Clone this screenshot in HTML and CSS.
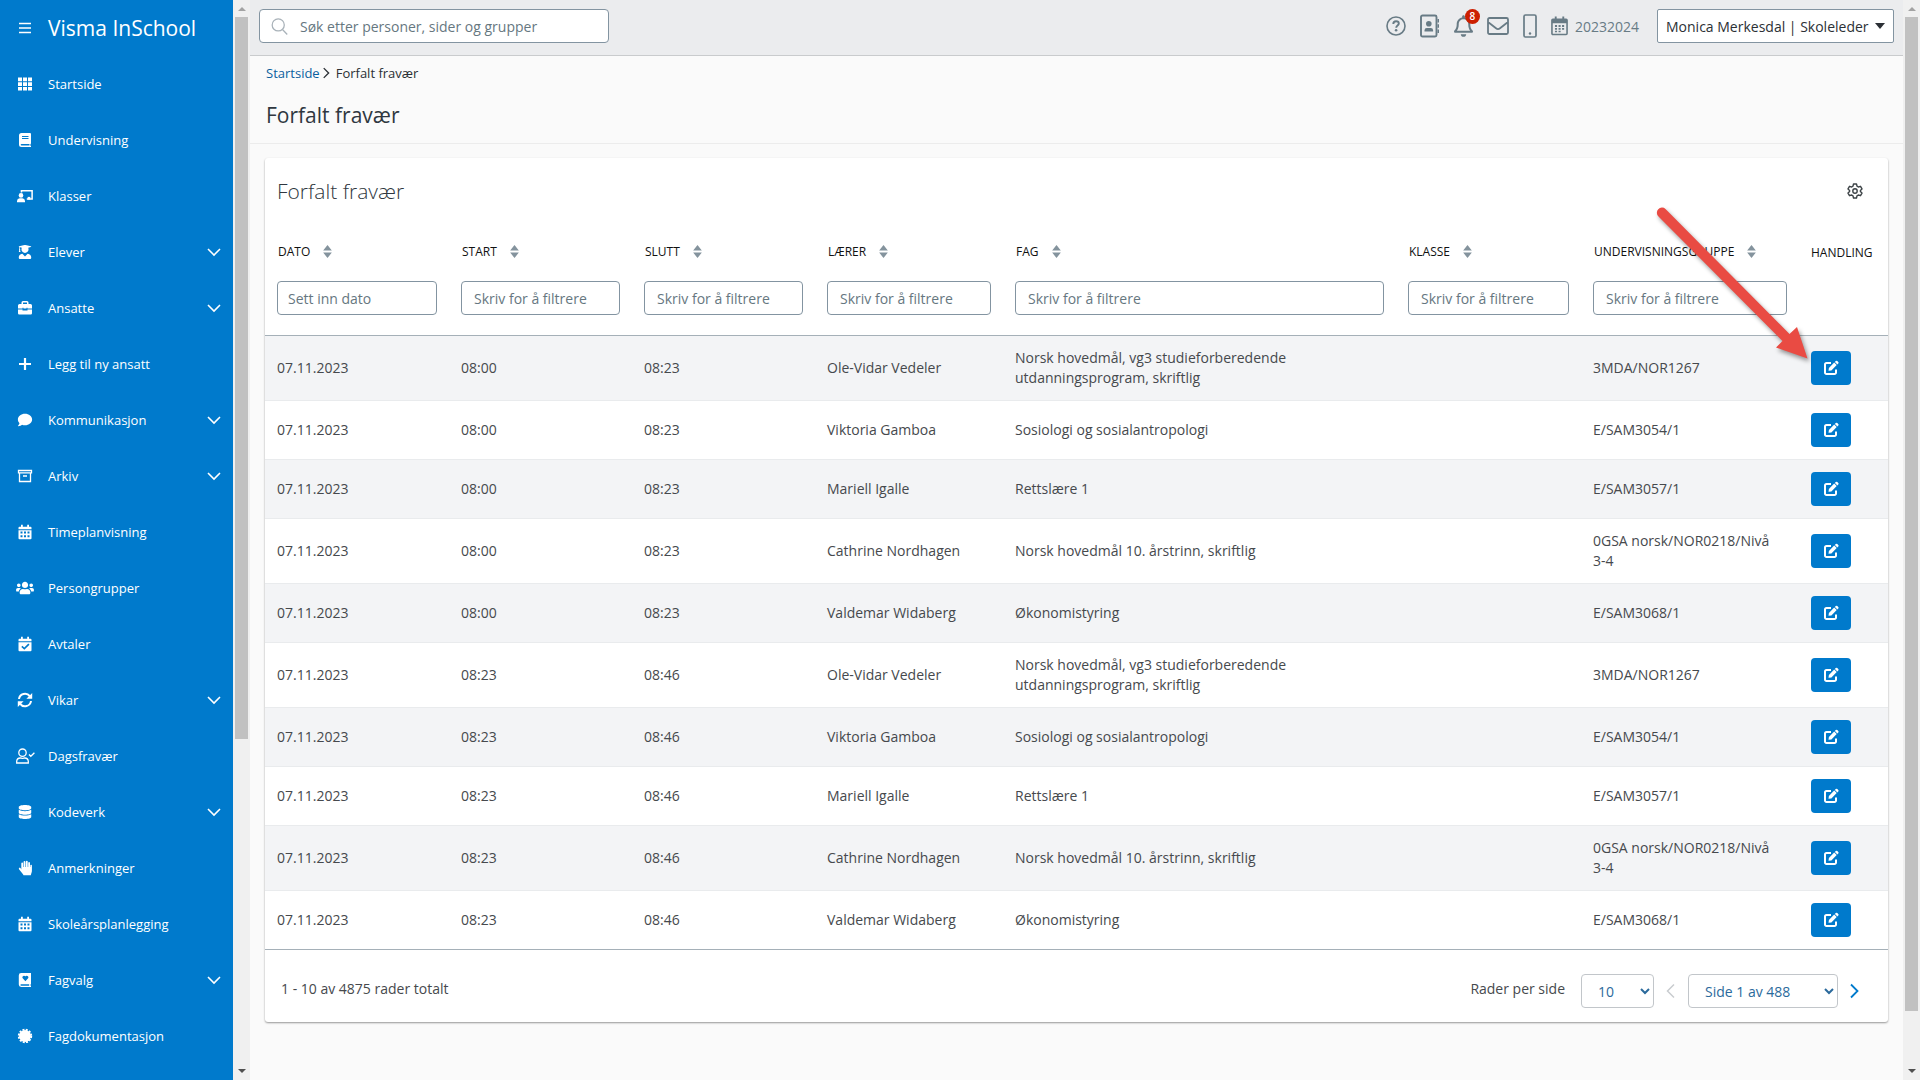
FILE: index.html
```
<!DOCTYPE html>
<html lang="no">
<head>
  <meta charset="UTF-8">
  <title>Visma InSchool - Forfalt fravær</title>
  <link rel="stylesheet" href="styles.css">
</head>
<body>
  <!-- icon sprite -->
  <svg class="sprite" aria-hidden="true">
    <symbol id="i-bars" viewBox="0 0 16 16"><path d="M2 3.5h12M2 8h12M2 12.5h12" stroke="currentColor" stroke-width="1.6"/></symbol>
    <symbol id="i-grid" viewBox="0 0 16 16"><path d="M1 1.500h4v3.700H1zM6 1.500h4v3.700H6zM11 1.500h4v3.700h-4zM1 6.200h4v3.700H1zM6 6.200h4v3.700H6zM11 6.200h4v3.700h-4zM1 10.900h4v3.700H1zM6 10.900h4v3.700H6zM11 10.900h4v3.700h-4z"/></symbol>
    <symbol id="i-book" viewBox="0 0 16 16"><path fill-rule="evenodd" d="M4.500 1H13a1 1 0 0 1 1 1v9.500l-.6.8v1.400l.6.4V15H4.500A2.500 2.500 0 0 1 2 12.500v-9A2.500 2.500 0 0 1 4.500 1zM5 4v1h6.500V4zM5 6v1h6.500V6zM4.500 12a.8.8 0 0 0 0 1.600h8V12z"/></symbol>
    <symbol id="i-class" viewBox="-1 -1 22 18"><path d="M6 4V2h12v9.500h-6" fill="none" stroke="currentColor" stroke-width="1.700"/><path d="M13 9h3v3h-3z"/><circle cx="5.500" cy="7.300" r="2.600"/><path d="M1 15v-1.500A3.200 3.200 0 0 1 4 10.500h3a3.200 3.200 0 0 1 3 3V15z"/></symbol>
    <symbol id="i-student" viewBox="-28 -32 504 576"><path d="M319.400 320.600L224 416l-95.400-95.400C57.100 323.700 0 382.200 0 454.400v9.600c0 26.500 21.500 48 48 48h352c26.500 0 48-21.500 48-48v-9.600c0-72.200-57.100-130.700-128.600-133.800zM13.600 79.800l6.400 1.500v58.400c-7 4.200-12 11.500-12 20.300 0 8.400 4.600 15.400 11.100 19.700L3.500 242c-1.700 6.900 2.100 14 7.600 14h41.800c5.500 0 9.300-7.100 7.600-14l-15.600-62.300C51.400 175.400 56 168.400 56 160c0-8.800-5-16.100-12-20.300V87.100l66 15.900c-8.600 17.200-14 36.400-14 57 0 70.700 57.300 128 128 128s128-57.300 128-128c0-20.600-5.300-39.800-14-57l96.300-23.200c18.200-4.400 18.200-27.100 0-31.500l-190.400-46c-13-3.100-26.700-3.100-39.700 0L13.600 48.200c-18.100 4.400-18.100 27.200 0 31.600z"/></symbol>
    <symbol id="i-case" viewBox="0 0 16 16"><path fill-rule="evenodd" d="M4.500 4V2.500A1.500 1.500 0 0 1 6 1h4a1.500 1.500 0 0 1 1.500 1.500V4h2A1.500 1.500 0 0 1 15 5.500V8.500h-4.500V7.700h-1v.8h-3v-.8h-1v.8H1v-3A1.500 1.500 0 0 1 2.500 4zM6 2.500V4h4V2.500zM1 9.500h4.500v1h5v-1H15v3.800a1.200 1.200 0 0 1-1.200 1.200H2.200A1.200 1.200 0 0 1 1 13.300z"/></symbol>
    <symbol id="i-plus" viewBox="0 0 16 16"><path d="M8 2v12M2 8h12" stroke="currentColor" stroke-width="2.200"/></symbol>
    <symbol id="i-comment" viewBox="-32 -32 576 576"><path d="M256 32C114.600 32 0 125.100 0 240c0 49.600 21.400 95 57 130.700C44.500 421.100 2.700 466 2.200 466.500c-2.200 2.300-2.800 5.700-1.500 8.700S4.800 480 8 480c66.300 0 116-31.800 140.600-51.400 32.700 12.300 69 19.400 107.400 19.400 141.400 0 256-93.100 256-208S397.400 32 256 32z"/></symbol>
    <symbol id="i-archive" viewBox="0 0 16 16"><path d="M1.500 2.500h13v2.300h-13zM2.500 5v8.500h11V5M6 8h4" fill="none" stroke="currentColor" stroke-width="1.300"/></symbol>
    <symbol id="i-calendar" viewBox="0 0 16 16"><path fill-rule="evenodd" d="M4 .8h1.800v2h4.400v-2H12v2h1.500a1 1 0 0 1 1 1v1.400h-13V3.800a1 1 0 0 1 1-1H4zM1.500 6.200h13v8a1 1 0 0 1-1 1h-11a1 1 0 0 1-1-1zM3.500 7.500v2h2v-2zM7 7.500v2h2v-2zM10.500 7.500v2h2v-2zM3.500 11.200v2h2v-2zM7 11.200v2h2v-2zM10.500 11.200v2h2v-2z"/></symbol>
    <symbol id="i-calcheck" viewBox="0 0 16 16"><path fill-rule="evenodd" d="M4 .8h1.800v2h4.400v-2H12v2h1.500a1 1 0 0 1 1 1v1.400h-13V3.800a1 1 0 0 1 1-1H4zM1.500 6.200h13v8a1 1 0 0 1-1 1h-11a1 1 0 0 1-1-1zM11.300 7.600L7.300 11.500 5.400 9.700l-1.100 1.200 3 2.900 5.200-5z"/></symbol>
    <symbol id="i-users" viewBox="-40 -32 720 576"><path d="M96 224c35.300 0 64-28.700 64-64s-28.700-64-64-64-64 28.700-64 64 28.700 64 64 64zm448 0c35.300 0 64-28.700 64-64s-28.700-64-64-64-64 28.700-64 64 28.700 64 64 64zm32 32h-64c-17.600 0-33.500 7.100-45.100 18.600 40.300 22.100 68.900 62 75.100 109.400h66c17.700 0 32-14.300 32-32v-32c0-35.300-28.700-64-64-64zm-256 0c61.900 0 112-50.100 112-112S381.900 32 320 32 208 82.100 208 144s50.100 112 112 112zm76.800 32h-8.300c-20.800 10-43.900 16-68.500 16s-47.600-6-68.500-16h-8.300C179.600 288 128 339.600 128 403.200V432c0 26.500 21.500 48 48 48h288c26.500 0 48-21.500 48-48v-28.800c0-63.600-51.600-115.200-115.200-115.200zm-223.700-13.400C161.500 263.100 145.600 256 128 256H64c-35.300 0-64 28.700-64 64v32c0 17.700 14.300 32 32 32h65.900c6.300-47.400 34.900-87.300 75.200-109.400z"/></symbol>
    <symbol id="i-sync" viewBox="0 0 16 16"><path d="M2 7a6 6 0 0 1 10.800-2.800M14 9a6 6 0 0 1-10.800 2.800" fill="none" stroke="currentColor" stroke-width="2"/><path d="M15.200 1v5.800H9.400zM.8 15V9.200h5.800z"/></symbol>
    <symbol id="i-usercheck" viewBox="0 0 20 16"><g fill="none" stroke="currentColor" stroke-width="1.300"><circle cx="7.500" cy="4.700" r="3.700"/><path d="M1.700 15v-1.800a3.500 3.500 0 0 1 3.500-3.200c1 0 1.300.4 2.300.4s1.300-.4 2.300-.4a3.500 3.500 0 0 1 3.500 3.200V15zM14 6.500l1.800 1.800L19.400 4.700"/></g></symbol>
    <symbol id="i-database" viewBox="-32 -32 512 576"><path d="M448 73.143v45.714C448 159.143 347.667 192 224 192S0 159.143 0 118.857V73.143C0 32.857 100.333 0 224 0s224 32.857 224 73.143zM448 176v102.857C448 319.143 347.667 352 224 352S0 319.143 0 278.857V176c48.125 33.143 136.208 48.572 224 48.572S399.874 209.143 448 176zm0 160v102.857C448 479.143 347.667 512 224 512S0 479.143 0 438.857V336c48.125 33.143 136.208 48.572 224 48.572S399.874 369.143 448 336z"/></symbol>
    <symbol id="i-hand" viewBox="0 0 16 16"><path d="M4.300 9.500V3.500a.9.900 0 0 1 1.800 0V7h.5V1.900a.9.900 0 0 1 1.800 0V7h.5V1.600a.9.900 0 0 1 1.800 0V7h.5V3a.9.900 0 0 1 1.800 0V7h.3V5.500a.8.800 0 0 1 1.600 0v5.200a5 5 0 0 1-.5 2.300l-.6 2.300H6.500l-.5-1.100-4-5a1 1 0 0 1 1.500-1.300z"/></symbol>
    <symbol id="i-bookheart" viewBox="0 0 16 16"><path fill-rule="evenodd" d="M4.200 1H14v11.200h-.5v1.600h.5V15H4.200A2.400 2.400 0 0 1 1.800 12.600V3.400A2.400 2.400 0 0 1 4.200 1zM8.400 9.200l2.700-2.900a1.600 1.600 0 0 0-2.300-2.200l-.4.400-.4-.4a1.600 1.600 0 0 0-2.300 2.200zM4.200 12.200a.8.800 0 0 0 0 1.600h8v-1.600z"/></symbol>
    <symbol id="i-seal" viewBox="0 0 16 16"><circle cx="8" cy="8" r="6"/><circle cx="8" cy="8" r="6.300" fill="none" stroke="currentColor" stroke-width="1.800" stroke-dasharray="2 1.299"/></symbol>
    <symbol id="i-down" viewBox="0 0 16 16"><path d="M2 5l6 6 6-6" fill="none" stroke="currentColor" stroke-width="1.600"/></symbol>
    <symbol id="i-right" viewBox="0 0 16 16"><path d="M5 1.500L11.500 8 5 14.500" fill="none" stroke="currentColor" stroke-width="1.800"/></symbol>
    <symbol id="i-left" viewBox="0 0 16 16"><path d="M11 1.500L4.500 8l6.500 6.500" fill="none" stroke="currentColor" stroke-width="1.500"/></symbol>
    <symbol id="i-search" viewBox="0 0 16 16"><path d="M11 11l4.300 4.500" stroke="currentColor" stroke-width="1.200"/><circle cx="6.800" cy="6.500" r="5.700" fill="none" stroke="currentColor" stroke-width="1.200"/></symbol>
    <symbol id="i-help" viewBox="0 0 20 20"><g fill="none" stroke="currentColor"><circle cx="10" cy="10" r="9" stroke-width="1.600"/><path d="M7.300 8c0-1.700 1.200-2.700 2.800-2.700s2.700 1 2.700 2.300c0 2-2.600 1.900-2.600 4.100" stroke-width="1.900"/></g><circle cx="10.100" cy="14.200" r="1.300"/></symbol>
    <symbol id="i-address" viewBox="0 0 20 24"><rect x="1" y="1.500" width="15.500" height="21" rx="1.500" fill="none" stroke="currentColor" stroke-width="1.900"/><path d="M17.500 5H19v3.500h-1.500zM17.500 10.200H19v3.500h-1.500zM17.500 15.500H19V19h-1.500zM4.500 17.500v-1.300A2.300 2.300 0 0 1 6.800 14h4a2.300 2.300 0 0 1 2.300 2.200v1.300z"/><circle cx="8.800" cy="9.700" r="2.800"/></symbol>
    <symbol id="i-bell" viewBox="0 0 448 512"><path d="M439.390 362.290c-19.320-20.760-55.470-51.990-55.470-154.290 0-77.700-54.480-139.900-127.940-155.160V32c0-17.670-14.320-32-31.980-32s-31.980 14.330-31.980 32v20.840C118.560 68.100 64.080 130.300 64.080 208c0 102.300-36.150 133.530-55.470 154.290-6 6.450-8.660 14.160-8.610 21.710.11 16.400 12.980 32 32.100 32h383.800c19.120 0 32-15.600 32.100-32 .05-7.550-2.610-15.270-8.610-21.710zM67.530 368c21.220-27.970 44.420-74.330 44.530-159.420 0-.2-.06-.38-.06-.58 0-61.860 50.140-112 112-112s112 50.140 112 112c0 .2-.06.38-.06.58.11 85.100 23.310 131.460 44.530 159.420H67.530zM224 512c35.320 0 63.970-28.650 63.970-64H160.030c0 35.350 28.650 64 63.970 64z"/></symbol>
    <symbol id="i-mail" viewBox="0 0 22 18"><path d="M1 2.500A1.500 1.500 0 0 1 2.500 1h17A1.500 1.500 0 0 1 21 2.500v13a1.500 1.500 0 0 1-1.500 1.500h-17A1.500 1.500 0 0 1 1 15.500zM1 5l8 6.300a3.300 3.300 0 0 0 4 0L21 5" fill="none" stroke="currentColor" stroke-width="1.800"/></symbol>
    <symbol id="i-phone" viewBox="0 0 14 24"><rect x="1" y="1" width="12" height="22" rx="1.500" fill="none" stroke="currentColor" stroke-width="1.700"/><circle cx="7" cy="19.500" r="1.200"/></symbol>
    <symbol id="i-date" viewBox="0 0 18 20"><path d="M1 4a1 1 0 0 1 1-1h14a1 1 0 0 1 1 1v14a1 1 0 0 1-1 1H2a1 1 0 0 1-1-1z" fill="none" stroke="currentColor" stroke-width="1.700"/><path d="M1 3h16v4H1zM4 0h2v3H4zM12 0h2v3h-2zM4.200 9h2.200v2H4.200zM8 9h2.200v2H8zM11.700 9h2.200v2h-2.200zM4.200 12h2.200v2H4.200zM8 12h2.200v2H8zM11.700 12h2.200v2h-2.200zM4.200 15h2.200v1.500H4.200zM8 15h2.200v1.500H8z"/></symbol>
    <symbol id="i-gear" viewBox="0 0 16 16"><path d="M6.500 1h3l.5 2.200 1.300.8 2.200-.7 1.500 2.600L13.400 7.400v1.200l1.600 1.500-1.500 2.600-2.200-.7-1.300.8-.5 2.200h-3L6 12.800 4.700 12l-2.200.7L1 10.100l1.600-1.500V7.400L1 5.900l1.500-2.600 2.200.7L6 3.200z" fill="none" stroke="currentColor" stroke-width="1.400" stroke-linejoin="round"/><circle cx="8" cy="8" r="2.200" fill="none" stroke="currentColor" stroke-width="1.400"/></symbol>
    <symbol id="i-sort" viewBox="0 0 8 12"><path d="M4 0l4 5H0zM4 12L0 7h8z"/></symbol>
    <symbol id="i-edit" viewBox="0 0 16 16"><path d="M8 3H3.500A1.500 1.500 0 0 0 2 4.500v8A1.500 1.500 0 0 0 3.500 14h8a1.500 1.500 0 0 0 1.500-1.500V9.500" fill="none" stroke="currentColor" stroke-width="2"/><path d="M5.500 10.800l.4-2.900 5.300-5.300 2.500 2.500-5.300 5.300zM11.900 1.900l.8-.8a1.100 1.100 0 0 1 1.600 0l.9.900a1.100 1.100 0 0 1 0 1.600l-.8.800z"/></symbol>
  </svg>

  <aside class="sidebar">
    <div class="brand">
      <button class="menu-toggle" type="button" aria-label="Meny"><svg class="nav-icon"><use href="#i-bars"/></svg></button>
      <span>Visma InSchool</span>
    </div>
    <nav id="menu"></nav>
  </aside>
  <div class="scrollbar scrollbar-menu"><i class="arrow-up"></i><div class="track"><div class="thumb"></div></div><i class="arrow-down"></i></div>

  <main class="main">
    <header class="topbar">
      <label class="search">
        <svg><use href="#i-search"/></svg>
        <input type="text" placeholder="Søk etter personer, sider og grupper" aria-label="Søk">
      </label>
      <div class="tools">
        <button type="button" aria-label="Hjelp"><svg class="icon-help"><use href="#i-help"/></svg></button>
        <button type="button" aria-label="Kontakter"><svg class="icon-address"><use href="#i-address"/></svg></button>
        <button type="button" class="bell" aria-label="Varsler"><svg class="icon-bell"><use href="#i-bell"/></svg><span class="badge">8</span></button>
        <button type="button" aria-label="Meldinger"><svg class="icon-mail"><use href="#i-mail"/></svg></button>
        <button type="button" aria-label="Mobil"><svg class="icon-phone"><use href="#i-phone"/></svg></button>
        <button type="button" class="year"><svg class="icon-date"><use href="#i-date"/></svg>20232024</button>
      </div>
      <select class="user" aria-label="Bruker"><option>Monica Merkesdal | Skoleleder</option></select>
    </header>

    <div class="page-head">
      <div class="breadcrumb"><a href="#">Startside</a><svg><use href="#i-right"/></svg><span>Forfalt fravær</span></div>
      <h1>Forfalt fravær</h1>
    </div>

    <section class="card">
      <div class="card-head">
        <h2>Forfalt fravær</h2>
        <button type="button" class="settings" aria-label="Innstillinger"><svg><use href="#i-gear"/></svg></button>
      </div>
      <table id="absenceTable">
        <colgroup>
          <col class="c-date"><col class="c-time"><col class="c-time"><col class="c-teacher"><col class="c-subject"><col class="c-class"><col class="c-group"><col class="c-action">
        </colgroup>
        <thead>
          <tr id="heads"></tr>
          <tr class="filters" id="filters"></tr>
        </thead>
        <tbody></tbody>
      </table>
      <footer class="card-foot">
        <span>1 - 10 av 4875 rader totalt</span>
        <div class="pager">
          <label for="perPage">Rader per side</label>
          <select id="perPage" class="per-page"><option>10</option><option>25</option><option>50</option></select>
          <button type="button" class="prev" aria-label="Forrige" disabled><svg><use href="#i-left"/></svg></button>
          <select class="page-no" aria-label="Side"><option>Side 1 av 488</option></select>
          <button type="button" class="next" aria-label="Neste"><svg><use href="#i-right"/></svg></button>
        </div>
      </footer>
      <!-- arrow pointing at the first edit button -->
      <svg class="pointer" viewBox="0 0 170 170" aria-hidden="true">
        <path d="M8.500 16.500a5 5 0 0 1 7-7.500L139.500 134l7.500-7 10.500 31.500L126 147.500l6.500-6.500z"/>
      </svg>
    </section>
  </main>
  <div class="scrollbar scrollbar-page"><i class="arrow-up"></i><div class="track"><div class="thumb"></div></div><i class="arrow-down"></i></div>

  <script>
    const menu = [
      ['grid', 'Startside'], ['book', 'Undervisning'], ['class', 'Klasser'],
      ['student', 'Elever', true], ['case', 'Ansatte', true], ['plus', 'Legg til ny ansatt'],
      ['comment', 'Kommunikasjon', true], ['archive', 'Arkiv', true], ['calendar', 'Timeplanvisning'],
      ['users', 'Persongrupper'], ['calcheck', 'Avtaler'], ['sync', 'Vikar', true],
      ['usercheck', 'Dagsfravær'], ['database', 'Kodeverk', true], ['hand', 'Anmerkninger'],
      ['calendar', 'Skoleårsplanlegging'], ['bookheart', 'Fagvalg', true], ['seal', 'Fagdokumentasjon']
    ];
    document.getElementById('menu').innerHTML = menu.map(([icon, text, sub]) => `
      <a href="#">
        <svg class="nav-icon"><use href="#i-${icon}"/></svg>
        <span>${text}</span>
        ${sub ? '<svg class="chevron"><use href="#i-down"/></svg>' : ''}
      </a>`).join('');

    const columns = ['Dato', 'Start', 'Slutt', 'Lærer', 'Fag', 'Klasse', 'Undervisningsgruppe'];
    document.getElementById('heads').innerHTML = columns.map(name => `
      <th><button type="button" class="sort">${name}<svg><use href="#i-sort"/></svg></button></th>`).join('') + '<th class="plain">Handling</th>';
    document.getElementById('filters').innerHTML = columns.map((name, i) => `
      <td><input type="text" aria-label="${name}" placeholder="${i ? 'Skriv for å filtrere' : 'Sett inn dato'}"></td>`).join('') + '<td></td>';

    const lessons = [
      ['Ole-Vidar Vedeler', 'Norsk hovedmål, vg3 studieforberedende utdanningsprogram, skriftlig', '3MDA/NOR1267'],
      ['Viktoria Gamboa', 'Sosiologi og sosialantropologi', 'E/SAM3054/1'],
      ['Mariell Igalle', 'Rettslære 1', 'E/SAM3057/1'],
      ['Cathrine Nordhagen', 'Norsk hovedmål 10. årstrinn, skriftlig', '0GSA norsk/NOR0218/Nivå 3-4'],
      ['Valdemar Widaberg', 'Økonomistyring', 'E/SAM3068/1']
    ];
    const times = [['08:00', '08:23'], ['08:23', '08:46']];
    const tableBody = document.querySelector('#absenceTable tbody');
    times.forEach(([start, end]) => {
      lessons.forEach(([teacher, subject, group]) => {
        const row = document.createElement('tr');
        row.innerHTML = `
          <td>07.11.2023</td>
          <td>${start}</td>
          <td>${end}</td>
          <td>${teacher}</td>
          <td><div class="subject">${subject}</div></td>
          <td></td>
          <td class="group">${group}</td>
          <td><button type="button" class="edit" aria-label="Rediger"><svg><use href="#i-edit"/></svg></button></td>
        `;
        tableBody.appendChild(row);
      });
    });
  </script>
</body>
</html>
```
FILE: styles.css
```
* {
  box-sizing: border-box;
}
body {
  margin: 0;
  display: flex;
  height: 100vh;
  overflow: hidden;
  background: #fafafa;
  color: #46494d;
  font-family: "Open Sans", sans-serif;
  font-size: 14px;
  line-height: 20px;
}
button, input, select {
  font-family: inherit;
  font-size: 14px;
}
button {
  display: flex;
  align-items: center;
  padding: 0;
  border: none;
  background: none;
  color: inherit;
  cursor: pointer;
}
svg {
  fill: currentColor;
  flex: none;
}
.sprite {
  display: none;
}

/* sidebar */
.sidebar {
  width: 233px;
  flex: none;
  overflow: hidden;
  background: #007acc;
  color: #fff;
}
.brand, .sidebar a {
  display: flex;
  align-items: center;
  height: 56px;
  padding: 0 11px 0 12px;
}
.brand {
  font-size: 21px;
  font-weight: 500;
}
.brand span, .sidebar a span {
  margin-left: 10px;
}
.sidebar a {
  color: #fff;
  font-size: 13px;
  font-weight: 500;
  text-decoration: none;
}
.nav-icon {
  width: 26px;
  height: 16px;
}
.chevron {
  width: 16px;
  height: 16px;
  margin-left: auto;
}

/* scrollbars */
.scrollbar {
  width: 17px;
  flex: none;
  display: flex;
  flex-direction: column;
  align-items: center;
  background: #f0f0f0;
}
.track {
  flex: 1;
  width: 13px;
}
.thumb {
  background: #c1c1c1;
}
.scrollbar-menu .thumb {
  height: 69%;
}
.scrollbar-page .thumb {
  height: 95%;
}
.arrow-up, .arrow-down {
  border: 4px solid transparent;
  margin: 3px 0 6px;
}
.arrow-up {
  border-bottom-color: #a3a3a3;
}
.arrow-down {
  border-top-color: #505050;
  margin: 6px 0 3px;
}

/* top bar */
.main {
  flex: 1;
  min-width: 0;
}
.topbar {
  display: flex;
  align-items: center;
  height: 56px;
  padding: 0 9px 3px;
  background: #ebecee;
  border-bottom: 1px solid #c9cbcd;
}
.search {
  display: flex;
  align-items: center;
  width: 350px;
  height: 34px;
  padding: 0 11px;
  background: #fff;
  border: 1px solid #8394a1;
  border-radius: 4px;
  color: #a9b2b9;
}
.search svg {
  width: 17px;
  height: 17px;
}
.search input {
  flex: 1;
  margin-left: 12px;
  padding: 0;
  border: none;
  outline: none;
}
input::placeholder {
  color: #66777f;
}
.tools {
  display: flex;
  align-items: center;
  gap: 14px;
  margin-left: auto;
  margin-right: 18px;
  color: #687b85;
}
.icon-help {
  width: 20px;
  height: 20px;
}
.icon-address {
  width: 20px;
  height: 24px;
}
.icon-bell {
  width: 19px;
  height: 22px;
}
.icon-mail {
  width: 22px;
  height: 18px;
}
.icon-phone {
  width: 14px;
  height: 24px;
}
.icon-date {
  width: 17px;
  height: 20px;
}
.year {
  gap: 7px;
}
.bell {
  position: relative;
}
.badge {
  position: absolute;
  top: -6px;
  right: -7px;
  width: 15px;
  height: 15px;
  border-radius: 50%;
  background: #cc1f00;
  color: #fff;
  font-size: 10px;
  font-weight: 600;
  line-height: 15px;
}
.user {
  width: 237px;
  height: 34px;
  padding: 0 8px;
  border: 1px solid #8394a1;
  border-radius: 2px;
  color: #2b3035;
  appearance: none;
  background: #fff url("data:image/svg+xml,%3Csvg xmlns='http://www.w3.org/2000/svg' viewBox='0 0 10 6'%3E%3Cpath d='M0 0h10L5 6z' fill='%232b3035'/%3E%3C/svg%3E") no-repeat right 8px center / 10px 6px;
}

/* page heading */
.page-head {
  height: 88px;
  padding: 7px 16px;
  border-bottom: 1px solid #ececec;
}
.breadcrumb {
  display: flex;
  align-items: center;
  font-size: 13px;
  color: #2b3035;
}
.breadcrumb a {
  color: #0a5f9e;
  text-decoration: none;
}
.breadcrumb svg {
  width: 12px;
  height: 12px;
  margin-right: 4px;
}
h1, h2 {
  margin: 0;
  font-size: 21px;
  line-height: 28px;
  color: #2f3740;
}
h1 {
  margin-top: 18px;
  font-weight: 500;
}
h2 {
  font-weight: 300;
}

/* card */
.card {
  position: relative;
  margin: 14px 15px 0;
  background: #fff;
  border-radius: 3px;
  box-shadow: 0 1px 2px rgba(0, 0, 0, 0.4);
}
.card-head {
  display: flex;
  align-items: center;
  justify-content: space-between;
  height: 66px;
  padding: 0 25px 0 12px;
}
.settings svg {
  width: 16px;
  height: 16px;
  color: #3d4347;
}
table {
  width: 100%;
  table-layout: fixed;
  border-collapse: separate;
  border-spacing: 0;
}
.c-date { width: 184px; }
.c-time { width: 183px; }
.c-teacher { width: 188px; }
.c-class { width: 185px; }
.c-group { width: 218px; }
.c-action { width: 89px; }
th, td {
  padding: 12px;
  text-align: left;
}
th {
  height: 54px;
  padding: 0 12px;
  color: #111;
  font-size: 12px;
  font-weight: 400;
  text-transform: uppercase;
}
th.plain {
  padding-top: 3px;
}
.sort {
  gap: 13px;
  padding-left: 1px;
  font-size: 12px;
  text-transform: uppercase;
}
.sort svg {
  width: 9px;
  height: 13px;
  color: #84939d;
}
.filters td {
  padding: 3px 12px 20px;
  border-bottom: 1px solid #a5b0b8;
}
.filters input {
  display: block;
  width: 100%;
  height: 34px;
  padding: 0 12px;
  border: 1px solid #8394a1;
  border-radius: 4px;
}
.filters input::placeholder {
  font-weight: 500;
}
.filters td:first-child input {
  padding: 0 10px;
}
tbody td {
  border-bottom: 1px solid #e9ebed;
}
tbody tr:nth-child(odd) {
  background: #f3f4f6;
}
tbody tr:last-child td {
  border-bottom-color: #a5b0b8;
}
tbody .group {
  padding-right: 24px;
}
.subject {
  max-width: 320px;
}
.edit {
  justify-content: center;
  width: 40px;
  height: 34px;
  border-radius: 4px;
  background: #007acc;
  color: #fff;
}
.edit svg {
  width: 16px;
  height: 16px;
}

/* pager */
.card-foot {
  display: flex;
  align-items: flex-start;
  justify-content: space-between;
  padding: 24px 26px 14px 16px;
}
.card-foot > span, .pager label {
  line-height: 30px;
}
.pager {
  display: flex;
}
.pager select {
  height: 34px;
  padding: 0 2px 0 12px;
  border: 1px solid #c2c6ca;
  border-radius: 4px;
  background: #fff;
  color: #2b6a9c;
}
.pager .per-page {
  width: 73px;
  margin-left: 16px;
}
.pager .page-no {
  width: 150px;
}
.pager button {
  height: 34px;
}
.pager svg {
  width: 16px;
  height: 16px;
}
.prev {
  margin: 0 9px;
  color: #c9cccf;
}
.next {
  margin-left: 8px;
  color: #007acc;
}

.pointer {
  position: absolute;
  top: 42px;
  right: 68px;
  width: 170px;
  height: 170px;
  fill: #e94b43;
  pointer-events: none;
  filter: drop-shadow(2px 3px 2px rgba(0, 0, 0, 0.4));
}
```
